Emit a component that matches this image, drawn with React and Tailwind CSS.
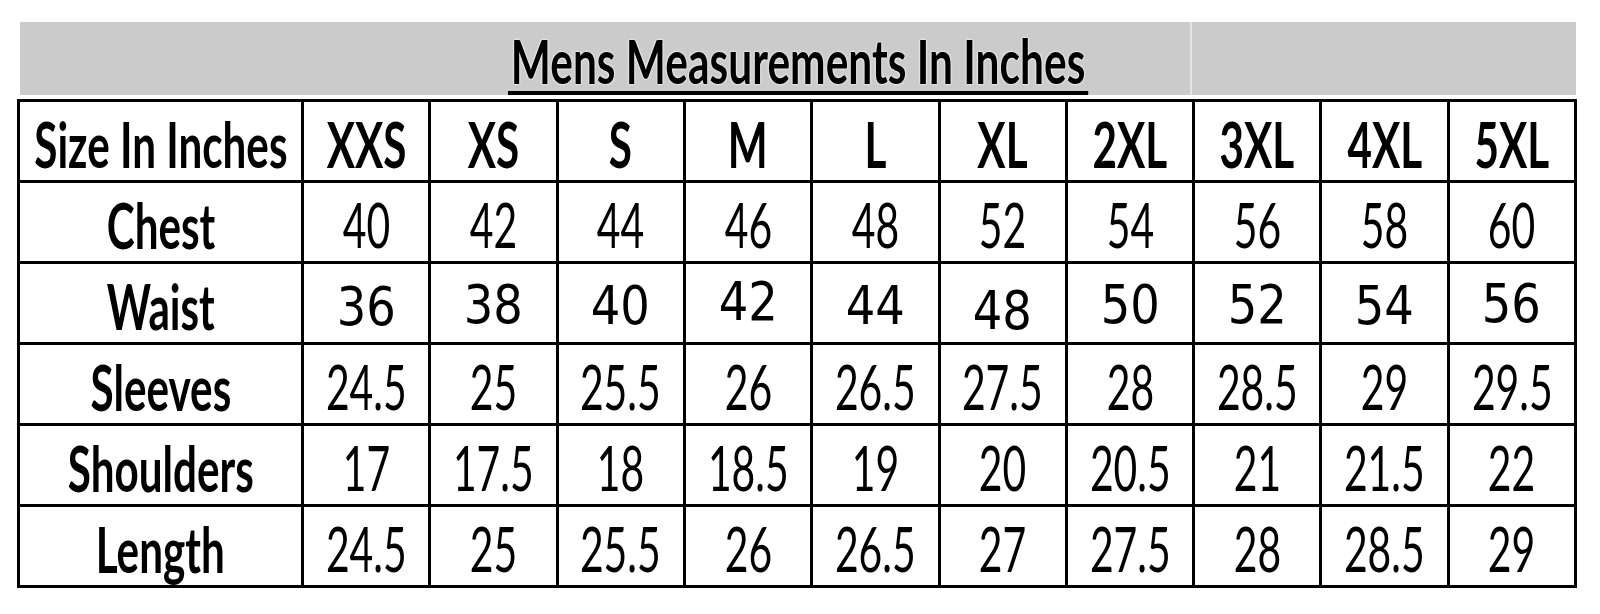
const sizes = ["XXS", "XS", "S", "M", "L", "XL", "2XL", "3XL", "4XL", "5XL"];

const rows = [
  { label: "Chest", values: ["40", "42", "44", "46", "48", "52", "54", "56", "58", "60"] },
  { label: "Waist", values: ["36", "38", "40", "42", "44", "48", "50", "52", "54", "56"], alt: true },
  { label: "Sleeves", values: ["24.5", "25", "25.5", "26", "26.5", "27.5", "28", "28.5", "29", "29.5"] },
  { label: "Shoulders", values: ["17", "17.5", "18", "18.5", "19", "20", "20.5", "21", "21.5", "22"] },
  { label: "Length", values: ["24.5", "25", "25.5", "26", "26.5", "27", "27.5", "28", "28.5", "29"] },
];

// small baseline wobble of the waist numbers in the original picture
const waistShift = [
  "translate-y-[4px]",
  "translate-y-[2px]",
  "translate-y-[3px]",
  "translate-y-[-1px]",
  "translate-y-[3px]",
  "translate-y-[8px]",
  "translate-y-[2px]",
  "translate-y-[2px]",
  "translate-y-[3px]",
  "translate-y-[1px]",
];

const Cell = ({ children }) => (
  <div className="h-[81px] flex items-center justify-center border-r-[3px] border-b-[3px] border-black bg-white overflow-hidden">
    {children}
  </div>
);

const Bold = ({ children }) => (
  <span className="inline-block whitespace-nowrap font-['Lato',sans-serif] font-bold text-[63px] leading-none text-black scale-x-[0.67] translate-y-[2px]">
    {children}
  </span>
);

const Num = ({ children }) => (
  <span className="inline-block whitespace-nowrap font-['Lato',sans-serif] text-[61px] leading-none text-black scale-x-[0.67] translate-y-[2px]">
    {children}
  </span>
);

const App = () => {
  return (
    <div className="min-h-screen bg-white pt-[22px] pl-[17px]">
      {/* Title bar */}
      <div className="ml-[3px] w-[1556px] h-[73px] bg-[#cbcbcb] flex mb-[4px]">
        <div className="w-[1172px] h-full pl-[488px] pt-[7px] border-r-2 border-[#e4e4e4]">
          <span className="inline-block origin-left scale-x-[0.685] whitespace-nowrap font-['Lato',sans-serif] font-bold text-[62px] leading-none text-black border-b-4 border-black px-[4px] [text-shadow:0_0_2px_#fff,0_0_3px_#fff]">
            Mens Measurements In Inches
          </span>
        </div>
      </div>

      {/* Size table */}
      <div className="w-[1560px] grid grid-cols-[284px_repeat(10,1fr)] border-l-[3px] border-t-[3px] border-black">
        <Cell>
          <Bold>Size In Inches</Bold>
        </Cell>
        {sizes.map((s) => (
          <Cell key={s}>
            <Bold>{s}</Bold>
          </Cell>
        ))}

        {rows.map((row) => (
          <div key={row.label} className="contents">
            <Cell>
              <Bold>{row.label}</Bold>
            </Cell>
            {row.values.map((v, i) => (
              <Cell key={i}>
                {row.alt ? (
                  <span
                    className={`inline-block whitespace-nowrap font-['DejaVu_Sans',sans-serif] text-[54px] leading-none text-black scale-x-[0.86] ${waistShift[i]}`}
                  >
                    {v}
                  </span>
                ) : (
                  <Num>{v}</Num>
                )}
              </Cell>
            ))}
          </div>
        ))}
      </div>
    </div>
  );
};

export default App;
